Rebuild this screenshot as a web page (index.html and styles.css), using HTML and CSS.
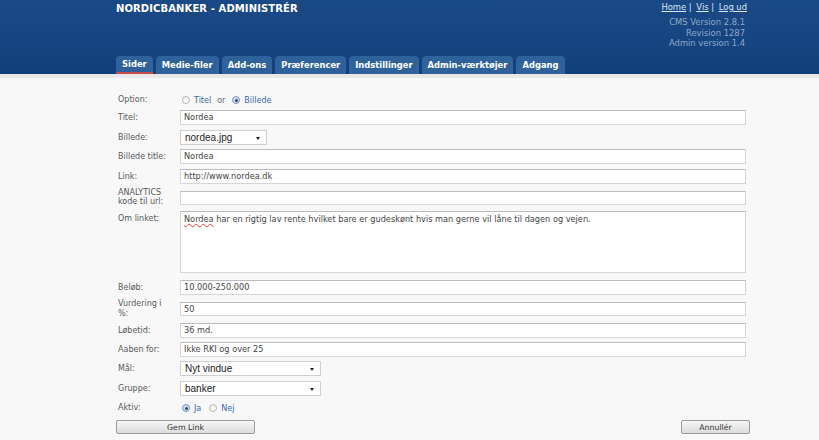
FILE: index.html
```html
<!DOCTYPE html>
<html lang="da">
<head>
    <meta charset="UTF-8">
    <title>Nordicbanker - Administrér</title>
    <link rel="stylesheet" href="styles.css">
</head>
<body>
    <div id="header">
        <div class="top">
            <h1>NORDICBANKER - ADMINISTRÉR</h1>
            <div class="meta">
                <div class="links"><a href="#">Home</a> | <a href="#">Vis</a> | <a href="#">Log ud</a></div>
                <div class="version">CMS Version 2.8.1<br>Revision 1287<br>Admin version 1.4</div>
            </div>
        </div>
        <ul class="tabs">
            <li class="active">Sider</li>
            <li>Medie-filer</li>
            <li>Add-ons</li>
            <li>Præferencer</li>
            <li>Indstillinger</li>
            <li>Admin-værktøjer</li>
            <li>Adgang</li>
        </ul>
    </div>

    <div id="content">
        <div class="form">
            <label class="row-option">Option:</label>
            <div class="radios row-option">
                <span class="radio"></span><span class="opt">Titel</span>
                <span class="or">or</span>
                <span class="radio checked"></span><span class="opt">Billede</span>
            </div>

            <label>Titel:</label>
            <div class="field">Nordea</div>

            <label>Billede:</label>
            <div class="select small">nordea.jpg</div>

            <label>Billede title:</label>
            <div class="field">Nordea</div>

            <label>Link:</label>
            <div class="field">http://www.nordea.dk</div>

            <label class="two">ANALYTICS<br>kode til url:</label>
            <div class="field offset"></div>

            <label>Om linket:</label>
            <div class="field area"><span class="typo">Nordea</span> har en rigtig lav rente hvilket bare er gudeskønt hvis man gerne vil låne til dagen og vejen.</div>

            <label>Beløb:</label>
            <div class="field">10.000-250.000</div>

            <label class="two">Vurdering i<br>%:</label>
            <div class="field offset">50</div>

            <label>Løbetid:</label>
            <div class="field">36 md.</div>

            <label>Aaben for:</label>
            <div class="field">Ikke RKI og over 25</div>

            <label>Mål:</label>
            <div class="select wide">Nyt vindue</div>

            <label>Gruppe:</label>
            <div class="select wide">banker</div>

            <label class="row-aktiv">Aktiv:</label>
            <div class="radios row-aktiv">
                <span class="radio checked"></span><span class="opt">Ja</span>
                <span class="radio"></span><span class="opt">Nej</span>
            </div>
        </div>

        <div class="buttons">
            <button class="save">Gem Link</button>
            <button class="cancel">Annullér</button>
        </div>
    </div>
</body>
</html>
```

FILE: styles.css
```css
body {
    margin: 0;
    font-family: "DejaVu Sans", Verdana, sans-serif;
    font-size: 8px;
    color: #5a5a5a;
    background-color: #f8f8f8;
}

#header {
    background: linear-gradient(#1a4a86, #164480 60%, #123f79);
    height: 74px;
    display: flex;
    flex-direction: column;
    justify-content: space-between;
    border-bottom: 4px solid #e8e8e8;
}

#header .top {
    display: flex;
    justify-content: space-between;
    padding: 0 72px 0 116px;
}

#header h1 {
    margin: 3px 0 0;
    font-size: 10px;
    color: white;
    letter-spacing: 0.1px;
}

.meta {
    text-align: right;
}

.links {
    margin-top: 2px;
    color: #dbe5f2;
    font-size: 8.4px;
}

.links a {
    color: #dbe5f2;
    margin-left: 2px;
}

.version {
    margin-top: 5px;
    color: #8ea8c9;
    font-size: 8.4px;
    line-height: 10.5px;
    margin-right: 2px;
}

.tabs {
    list-style: none;
    margin: 0;
    padding: 0 0 0 116px;
    display: flex;
    gap: 3px;
}

.tabs li {
    background-color: #2f629b;
    color: white;
    font-weight: bold;
    font-size: 8.4px;
    padding: 0 6px;
    height: 18px;
    line-height: 19px;
    border-radius: 4px 4px 0 0;
    box-sizing: border-box;
}

.tabs li.active {
    border-bottom: 2px solid #c54b4b;
    line-height: 17px;
}

#content {
    width: 634px;
    padding: 16px 0 0 116px;
}

.form {
    display: grid;
    grid-template-columns: 64px 566px;
    row-gap: 4.4px;
    align-items: start;
}

.form label {
    padding: 3px 0 0 2px;
    line-height: 10px;
}

.form label.two {
    padding-top: 0;
    line-height: 9.5px;
}

.form label.row-option {
    padding-top: 1px;
}

.form label.row-aktiv {
    padding-top: 3px;
}

.field {
    height: 15px;
    box-sizing: border-box;
    background: white;
    border: 1px solid #d6d6d6;
    border-top-color: #bdbdbd;
    padding: 0 3px;
    font-size: 8.2px;
    line-height: 13px;
    color: #444;
}

.field.offset {
    margin-top: 3px;
    height: 14px;
    line-height: 12px;
}

.field.area {
    height: 62px;
    line-height: 12px;
    padding-top: 1px;
    margin-bottom: 2px;
}

.typo {
    text-decoration: underline wavy #e04040;
    text-decoration-thickness: 1px;
}

.select {
    height: 15px;
    box-sizing: border-box;
    background: white;
    border: 1px solid #d0d0d0;
    padding: 0 4px;
    font-family: "Liberation Sans", Arial, sans-serif;
    font-size: 10px;
    line-height: 13px;
    color: #222;
    position: relative;
}

.select::after {
    content: "";
    position: absolute;
    right: 6px;
    top: 6px;
    border-left: 2.5px solid transparent;
    border-right: 2.5px solid transparent;
    border-top: 3px solid #222;
}

.select.small {
    width: 87px;
}

.select.wide {
    width: 141px;
}

.radios {
    display: flex;
    align-items: center;
    height: 12px;
}

.radios.row-aktiv {
    height: 16px;
}

.radio {
    width: 8px;
    height: 8px;
    border-radius: 50%;
    border: 1px solid #b8b8b8;
    background: linear-gradient(#eee, #fff);
    margin: 0 4px 0 2px;
    box-sizing: border-box;
    position: relative;
}

.radio.checked::after {
    content: "";
    position: absolute;
    left: 1.5px;
    top: 1.5px;
    width: 3px;
    height: 3px;
    border-radius: 50%;
    background: #2d4f73;
}

.radio.checked {
    border-color: #7c98b8;
    background: #cfdcea;
}

.opt {
    color: #3b6aa6;
    margin-right: 6px;
}

.or {
    color: #666;
    margin-right: 5px;
}

.buttons {
    display: flex;
    justify-content: space-between;
    margin-top: 4px;
}

button {
    font-family: "DejaVu Sans", Verdana, sans-serif;
    font-size: 7.8px;
    color: #333;
    height: 14px;
    padding: 0;
    border: 1px solid #9a9a9a;
    border-radius: 2px;
    background: linear-gradient(#f6f6f6, #dcdcdc);
}

button.save {
    width: 139px;
}

button.cancel {
    width: 69px;
}
```
